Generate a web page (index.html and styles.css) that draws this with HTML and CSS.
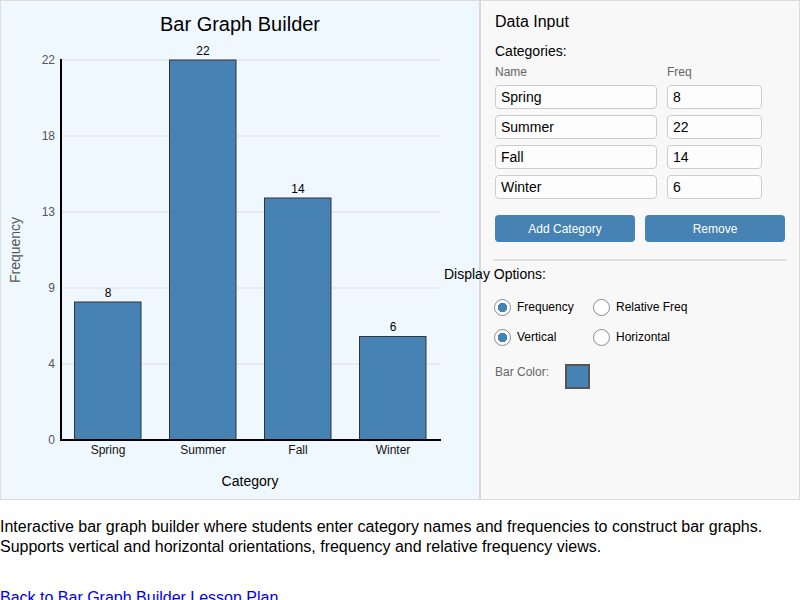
FILE: index.html
```html
<!DOCTYPE html>
<html lang="en">
<head>
    <meta charset="UTF-8">
    <title>Bar Graph Builder</title>
    <link rel="stylesheet" href="styles.css">
</head>
<body>
    <div class="app">
        <div class="chart-panel">
            <svg class="chart" width="478" height="498" viewBox="1 1 478 498">
                <text class="title" x="240" y="31">Bar Graph Builder</text>

                <!-- grid -->
                <g class="grid">
                    <line x1="60" y1="60" x2="440" y2="60"/>
                    <line x1="60" y1="136" x2="440" y2="136"/>
                    <line x1="60" y1="212" x2="440" y2="212"/>
                    <line x1="60" y1="288" x2="440" y2="288"/>
                    <line x1="60" y1="364" x2="440" y2="364"/>
                </g>

                <g class="tick">
                    <text x="55" y="64">22</text>
                    <text x="55" y="140">18</text>
                    <text x="55" y="216">13</text>
                    <text x="55" y="292">9</text>
                    <text x="55" y="368">4</text>
                    <text x="55" y="444">0</text>
                </g>

                <!-- bars -->
                <g class="bars">
                    <rect x="74.5" y="302" width="66.5" height="138"/>
                    <rect x="169.5" y="60" width="66.5" height="380"/>
                    <rect x="264.5" y="198" width="66.5" height="242"/>
                    <rect x="359.5" y="336.5" width="66.5" height="103.5"/>
                </g>

                <g class="value">
                    <text x="108" y="297">8</text>
                    <text x="203" y="55">22</text>
                    <text x="298" y="193">14</text>
                    <text x="393" y="331">6</text>
                </g>

                <g class="axis">
                    <line x1="61" y1="59" x2="61" y2="441"/>
                    <line x1="60" y1="440" x2="441" y2="440"/>
                </g>

                <g class="cat">
                    <text x="108" y="454">Spring</text>
                    <text x="203" y="454">Summer</text>
                    <text x="298" y="454">Fall</text>
                    <text x="393" y="454">Winter</text>
                </g>

                <text class="axis-title" x="250" y="486">Category</text>
                <text class="axis-title side" x="20" y="250" transform="rotate(-90 20 250)">Frequency</text>
            </svg>
        </div>

        <div class="controls">
            <h3 class="panel-title">Data Input</h3>
            <div class="section-label">Categories:</div>
            <div class="col-heads">
                <span class="col-name">Name</span>
                <span>Freq</span>
            </div>

            <div class="rows">
                <div class="row">
                    <input class="input name" value="Spring">
                    <input class="input freq" value="8">
                </div>
                <div class="row">
                    <input class="input name" value="Summer">
                    <input class="input freq" value="22">
                </div>
                <div class="row">
                    <input class="input name" value="Fall">
                    <input class="input freq" value="14">
                </div>
                <div class="row">
                    <input class="input name" value="Winter">
                    <input class="input freq" value="6">
                </div>
            </div>

            <div class="btn-row">
                <button class="btn">Add Category</button>
                <button class="btn">Remove</button>
            </div>

            <hr class="divider">

            <div class="options-label">Display Options:</div>

            <div class="radio-row">
                <label class="opt"><input type="radio" class="radio" name="mode" checked> Frequency</label>
                <label class="opt"><input type="radio" class="radio" name="mode"> Relative Freq</label>
            </div>
            <div class="radio-row">
                <label class="opt"><input type="radio" class="radio" name="orient" checked> Vertical</label>
                <label class="opt"><input type="radio" class="radio" name="orient"> Horizontal</label>
            </div>

            <div class="color-row">
                <span class="color-label">Bar Color:</span>
                <span class="swatch"></span>
            </div>
        </div>
    </div>

    <p class="desc">Interactive bar graph builder where students enter category names and frequencies to construct bar graphs. Supports vertical and horizontal orientations, frequency and relative frequency views.</p>

    <p class="back"><a href="#">Back to Bar Graph Builder Lesson Plan</a></p>
</body>
</html>
```

FILE: styles.css
```css
* {
    box-sizing: border-box;
}

body {
    margin: 0;
    font-family: 'Liberation Sans', Arial, sans-serif;
    color: #000;
    background: #fff;
}

.app {
    width: 800px;
    height: 500px;
    display: flex;
    border: 1px solid #dcdcdc;
}

.chart-panel {
    width: 478px;
    background: #f0f8ff;
}

.chart {
    display: block;
    font-family: 'Liberation Sans', Arial, sans-serif;
}

.title {
    font-size: 20px;
    text-anchor: middle;
    fill: #000;
}

.grid line {
    stroke: #e4e6ea;
    stroke-width: 1.5;
}

.tick text {
    font-size: 12px;
    fill: #555;
    text-anchor: end;
}

.bars rect {
    fill: #4682b4;
    stroke: #333;
    stroke-width: 1;
}

.value text {
    font-size: 12px;
    fill: #000;
    text-anchor: middle;
}

.axis line {
    stroke: #000;
    stroke-width: 2;
}

.cat text {
    font-size: 12px;
    fill: #111;
    text-anchor: middle;
}

.axis-title {
    font-size: 14px;
    text-anchor: middle;
    fill: #000;
}

.axis-title.side {
    fill: #555;
}

.controls {
    flex: 1;
    background: #f8f8f8;
    border-left: 2px solid #d8d8d8;
    padding: 11px 12px 0 14px;
    font-size: 12px;
}

.panel-title {
    margin: 0;
    font-size: 16px;
    font-weight: normal;
    line-height: 20px;
}

.section-label {
    margin-top: 10px;
    font-size: 14px;
    line-height: 18px;
}

.col-heads {
    margin-top: 5px;
    display: flex;
    line-height: 14px;
    color: #666;
}

.col-name {
    width: 172px;
}

.rows {
    margin-top: 6px;
    display: flex;
    flex-direction: column;
    gap: 6px;
}

.row {
    display: flex;
    gap: 10px;
}

.input {
    height: 24px;
    border: 1px solid #ccc;
    border-radius: 4px;
    background: #fdfdfd;
    font-family: 'Liberation Sans', Arial, sans-serif;
    font-size: 14px;
    padding: 0 5px;
    color: #000;
}

.input.name {
    width: 162px;
}

.input.freq {
    width: 95px;
}

.btn-row {
    margin-top: 16px;
    display: flex;
    gap: 10px;
}

.btn {
    width: 140px;
    height: 27px;
    background: #4682b4;
    color: #fff;
    border: none;
    border-radius: 4px;
    font-family: 'Liberation Sans', Arial, sans-serif;
    font-size: 12px;
    padding: 0;
}

.divider {
    margin: 17px 0 0 -1px;
    border: none;
    border-top: 2px solid #ddd;
    width: 292px;
}

.options-label {
    margin: 4px 0 0 -51px;
    font-size: 14px;
    line-height: 18px;
}

.radio-row {
    margin-top: 16px;
    display: flex;
    height: 16px;
    align-items: center;
}

.radio-row + .radio-row {
    margin-top: 14px;
}

.opt {
    width: 100px;
    display: flex;
    align-items: center;
    gap: 6px;
    margin-left: -1px;
    white-space: nowrap;
}

.radio {
    appearance: none;
    -webkit-appearance: none;
    width: 17px;
    height: 17px;
    margin: 0;
    border: 1px solid #8a8a8a;
    border-radius: 50%;
    background: #fff;
}

.radio:checked {
    background: radial-gradient(circle, #4682b4 0 4.5px, #fff 5px);
}

.color-row {
    margin-top: 19px;
    display: flex;
    gap: 16px;
}

.color-label {
    color: #666;
    line-height: 16px;
}

.swatch {
    width: 25px;
    height: 25px;
    background: #4682b4;
    border: 2px solid #555;
}

.desc {
    margin: 17px 0 0;
    font-size: 16px;
    line-height: 20px;
}

.back {
    margin: 31px 0 0;
    font-size: 16px;
    line-height: 20px;
}

.back a {
    color: #0000ee;
}
```
